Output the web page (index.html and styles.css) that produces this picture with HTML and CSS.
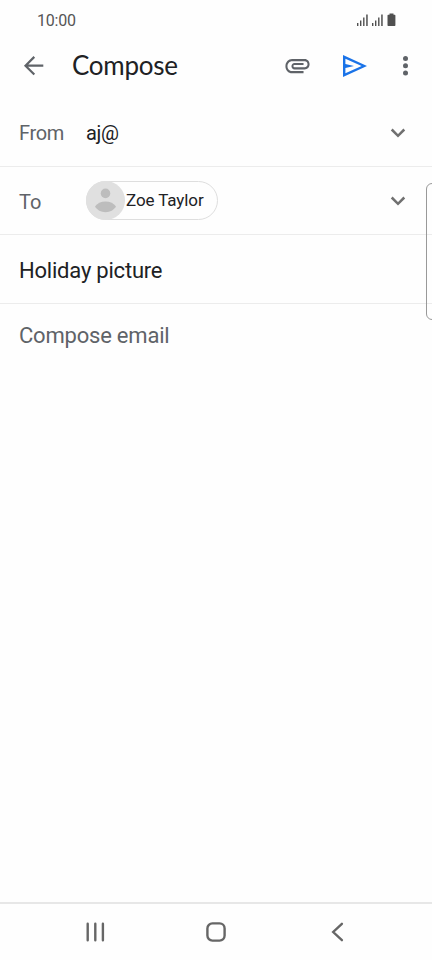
FILE: index.html
```html
<!DOCTYPE html>
<html lang="en">
<head>
<meta charset="utf-8">
<title>Compose</title>
<link rel="stylesheet" href="styles.css">
</head>
<body>
<div class="screen">
  <div class="status">
    <span class="time">10:00</span>
    <svg class="indicators" width="42" height="16" viewBox="0 0 42 16" fill="#505050">
      <path d="M1 10h1.400v3H1zM4 7.400h1.400V13H4zM7.100 4.400h1.400V13H7.100zM10.200 1.500h1.500V13h-1.500z"/>
      <path d="M16 10h1.400v3H16zM19 7.400h1.400V13H19zM22.100 4.400h1.400V13h-1.400zM25.200 1.500h1.500V13h-1.500z"/>
      <path d="M33.500 .6h4v1.200h1.200c.4 0 .7.300.7.700V12.300c0 .4-.3.700-.7.700h-6.500c-.4 0-.7-.3-.7-.7V2.500c0-.4.300-.7.700-.7h1.300z"/>
    </svg>
  </div>
  <header class="appbar">
    <svg class="back" width="24" height="24" viewBox="0 0 24 24" fill="none" stroke="#5f6368" stroke-width="2.200"><path d="M21.300 11.700H4M12.300 2.900 3.500 11.700l8.800 8.800"/></svg>
    <h1>Compose</h1>
    <svg class="attach" width="29" height="31" viewBox="0 0 24 24" preserveAspectRatio="none" fill="#5f6368"><path d="M2 12.500C2 9.460 4.460 7 7.500 7H18c2.210 0 4 1.790 4 4s-1.790 4-4 4H9.500C8.120 15 7 13.880 7 12.500S8.120 10 9.500 10H17v1.600H9.410c-1.100 0-1.100 1.700 0 1.700H18c1.270 0 2.300-1.030 2.300-2.300S19.270 8.700 18 8.700H7.500C5.400 8.700 3.700 10.400 3.700 12.500S5.400 16.300 7.500 16.300H17V18H7.500C4.460 18 2 15.540 2 12.500z"/></svg>
    <svg class="send" width="26" height="24" viewBox="0 0 26 24"><path fill="#1a73e8" fill-rule="evenodd" d="M1 1 25 12 1 23zM3.400 4.700v5.400l8.600 1.900-8.600 1.900v5.400L19.600 12z"/></svg>
    <svg class="more" width="6" height="22" viewBox="0 0 6 22" fill="#5f6368"><circle cx="2.500" cy="3.500" r="2.500"/><circle cx="2.500" cy="10.700" r="2.500"/><circle cx="2.500" cy="17.900" r="2.500"/></svg>
  </header>
  <main>
    <div class="row from">
      <span class="label">From</span><span class="value">aj@</span>
      <svg class="chevron" width="16" height="12" viewBox="0 0 16 12"><path d="M1.700 2.500 8 8.800l6.300-6.300"/></svg>
    </div>
    <div class="row to">
      <span class="label">To</span>
      <div class="chip">
        <svg width="39" height="39" viewBox="0 0 39 39"><circle cx="19.500" cy="19.500" r="19.500" fill="#e0e0e0"/><circle cx="19.500" cy="12.400" r="4.800" fill="#bdbdbd"/><path fill="#bdbdbd" d="M9 25.500c2-3.300 6-5.100 10.500-5.100S28 22.200 30 25.500c-2 3.500-6 5.700-10.500 5.700S11 29 9 25.500z"/></svg>
        <span>Zoe Taylor</span>
      </div>
      <svg class="chevron" width="16" height="12" viewBox="0 0 16 12"><path d="M1.700 2.500 8 8.800l6.300-6.300"/></svg>
    </div>
    <div class="row subject"><span>Holiday picture</span></div>
    <div class="body"><span>Compose email</span></div>
  </main>
  <nav class="nav">
    <svg width="20" height="20" viewBox="0 0 20 20"><path d="M2.700 1.800v16.400M10.300 1.800v16.400M17.900 1.800v16.400"/></svg>
    <svg width="20" height="20" viewBox="0 0 20 20"><rect x="1.400" y="1.400" width="17.200" height="17.200" rx="5"/></svg>
    <svg width="20" height="20" viewBox="0 0 20 20"><path d="M14.900 1.800 6.200 10l8.700 8.200"/></svg>
  </nav>
  <div class="edge"></div>
</div>
</body>
</html>
```
FILE: styles.css
```css
* { box-sizing: border-box; }
body { margin: 0; background: #fefefe; font-family: Roboto, sans-serif; color: #202124; }
.screen { position: relative; width: 432px; height: 960px; overflow: hidden; display: flex; flex-direction: column; background: #fefefe; }
svg { display: block; flex: none; }
.status { height: 40px; display: flex; align-items: center; padding: 1px 34px 0 37px; }
.time { font-size: 16px; letter-spacing: -.2px; color: #555; flex: 1; }
.indicators { margin-top: 1px; }
.appbar { height: 60px; display: flex; align-items: center; padding: 0 23px 9px 22px; }
h1 { margin: -2px 0 0 26px; flex: 1; font: 400 26px/30px Lato, sans-serif; letter-spacing: -.25px; }
.attach { margin: -1px 30px 0 0; }
.send { margin-right: 35px; }
.row { height: 68px; display: flex; align-items: center; padding: 0 26px 0 19px; border-bottom: 1px solid #ececec; }
.from { height: 67px; }
.subject { height: 69px; }
.label { width: 67px; font-size: 20px; letter-spacing: -.35px; color: #5f6368; }
.to .label { padding-top: 2px; letter-spacing: 0; }
.value { font-size: 20px; letter-spacing: -.3px; }
.chevron { margin-left: auto; fill: none; stroke: #707070; stroke-width: 2.5; }
.chip { width: 132px; height: 39px; border: 1px solid #dedede; border-radius: 20px; display: flex; align-items: center; font-size: 17px; letter-spacing: -.1px; }
.chip svg { margin: 0 1px 0 -1px; }
.chip span { white-space: nowrap; margin-top: -1px; }
.subject, .body { font-size: 22px; letter-spacing: -.21px; }
.subject { padding-top: 2px; }
.body { padding: 19px 19px; line-height: 26px; color: #5f6368; }
main { flex: 1; }
.nav { height: 58px; border-top: 2px solid #e7e7e7; display: flex; justify-content: space-between; align-items: center; padding: 0 85px; }
.nav svg { fill: none; stroke: #666; stroke-width: 2.4; stroke-linecap: round; }
.edge { position: absolute; left: 426px; top: 183px; width: 16px; height: 137px; border: 1px solid #999; border-radius: 6px; }
```
